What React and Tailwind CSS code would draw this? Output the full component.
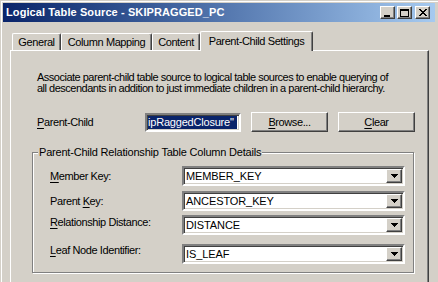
import React from "react";

const raised =
  "bg-[#d4d0c8] border border-t-white border-l-white border-r-[#404040] border-b-[#404040] shadow-[inset_-1px_-1px_0_#808080]";

function TitleButton({ children, className = "" }) {
  return (
    <div className={`w-[15px] h-[13px] flex items-center justify-center ${raised} ${className}`}>
      {children}
    </div>
  );
}

function Tab({ label, width, active }) {
  if (active) {
    return (
      <div
        className={`${width} h-[20px] -mb-[1px] relative z-10 bg-[#d4d0c8] border-t border-l border-white border-r border-r-[#404040] shadow-[inset_-1px_0_0_#808080] rounded-t-[2px] flex items-start pt-[3px] justify-center`}
      >
        {label}
      </div>
    );
  }
  return (
    <div
      className={`${width} h-[17px] bg-[#d4d0c8] border-t border-l border-white border-r border-r-[#404040] shadow-[inset_-1px_0_0_#808080] rounded-t-[2px] flex items-center justify-center`}
    >
      {label}
    </div>
  );
}

function U({ children }) {
  return <span className="underline underline-offset-[2px]">{children}</span>;
}

function Button({ children }) {
  return (
    <div className={`w-[77px] h-[20px] flex items-center justify-center ${raised}`}>
      {children}
    </div>
  );
}

function Combo({ value }) {
  return (
    <div className="w-[223px] h-[20px] flex p-[1px] bg-white border-2 border-t-[#808080] border-l-[#808080] border-b-white border-r-white shadow-[inset_1px_1px_0_#404040,inset_-1px_-1px_0_#d4d0c8]">
      <div className="flex-1 flex items-center pl-[1px] tracking-[-0.1px]">{value}</div>
      <div className={`w-[16px] h-full flex items-center justify-center ${raised}`}>
        <svg width="7" height="4" viewBox="0 0 7 4">
          <path d="M0 0h7v1h-1v1h-1v1h-1v1h-1v-1h-1v-1h-1v-1h-1z" fill="#000" />
        </svg>
      </div>
    </div>
  );
}

function Row({ label, value, className = "", labelClass = "" }) {
  return (
    <div className={`flex items-center ${className}`}>
      <div className={`w-[132px] ${labelClass}`}>{label}</div>
      <Combo value={value} />
    </div>
  );
}

export default function App() {
  return (
    <div className="w-[438px] h-[282px] overflow-hidden bg-[#d4d0c8] flex flex-col pt-[3px] pl-[3px] pr-[3px] shadow-[inset_1px_1px_0_#d4d0c8,inset_2px_2px_0_#ffffff] font-['Liberation_Sans',Arial,sans-serif] text-[11px] leading-[13px] tracking-[-0.4px] text-black">
      {/* Title bar */}
      <div className="flex h-[19px] items-center bg-linear-to-r from-[#0a246a] to-[#a6caf0] pl-[3px] pr-[5px]">
        <div className="flex-1 text-white font-bold text-[11px] tracking-[0.1px] whitespace-nowrap">
          Logical Table Source - SKIPRAGGED_PC
        </div>
        <TitleButton>
          <div className="w-[6px] h-[2px] bg-black mt-[6px] -ml-[2px]" />
        </TitleButton>
        <TitleButton className="ml-[2px]">
          <div className="w-[9px] h-[8px] border border-black border-t-2" />
        </TitleButton>
        <TitleButton className="ml-[3px]">
          <svg width="8" height="7" viewBox="0 0 8 7">
            <path d="M0 0h2v1h1v1h2v-1h1v-1h2v1h-1v1h-1v1h-1v1h1v1h1v1h1v1h-2v-1h-1v-1h-2v1h-1v1h-2v-1h1v-1h1v-1h1v-1h-1v-1h-1v-1h-1z" fill="#000" />
          </svg>
        </TitleButton>
      </div>

      {/* Tabs */}
      <div className="flex items-end h-[28px] pl-[9px] whitespace-nowrap">
        <Tab label="General" width="w-[49px]" />
        <Tab label="Column Mapping" width="w-[91px]" />
        <Tab label="Content" width="w-[48px]" />
        <Tab label="Parent-Child Settings" width="w-[113px]" active />
      </div>

      {/* Panel */}
      <div className="ml-[7px] w-[419px] flex-1 border-t border-l border-white border-r border-r-[#404040] shadow-[inset_-1px_0_0_#808080] pl-[21px] pt-[21px]">
        <div className="ml-[5px] leading-[11px] whitespace-nowrap tracking-[-0.5px]">
          Associate parent-child table source to logical table sources to enable querying of
          <br />
          all descendants in addition to just immediate children in a parent-child hierarchy.
        </div>

        <div className="ml-[5px] mt-[18px] flex items-center h-[20px]">
          <div className="w-[108px]">
            <U>P</U>arent-Child
          </div>
          <div className="w-[96px] h-[19px] flex items-center overflow-hidden bg-white border-2 border-t-[#808080] border-l-[#808080] border-b-white border-r-white shadow-[inset_1px_1px_0_#404040,inset_-1px_-1px_0_#d4d0c8] pl-[1px] pr-[2px]">
            <div className="bg-[#0a246a] text-white w-full h-[13px] flex items-center whitespace-nowrap overflow-hidden tracking-[-0.2px]">
              ipRaggedClosure"
            </div>
          </div>
          <div className="ml-[10px]">
            <Button>
              <span>
                <U>B</U>rowse...
              </span>
            </Button>
          </div>
          <div className="ml-[10px]">
            <Button>
              <span>
                <U>C</U>lear
              </span>
            </Button>
          </div>
        </div>

        {/* Group box */}
        <div className="relative mt-[20px] w-[382px] h-[121px] border border-[#808080] shadow-[inset_1px_1px_0_#ffffff,1px_1px_0_#ffffff] pl-[17px] pt-[13px]">
          <div className="absolute -top-[7px] left-[5px] px-[1px] bg-[#d4d0c8] leading-[12px] whitespace-nowrap tracking-[-0.2px]">
            Parent-Child Relationship Table Column Details
          </div>
          <Row label={<><U>M</U>ember Key:</>} value="MEMBER_KEY" />
          <Row label={<>Parent <U>K</U>ey:</>} value="ANCESTOR_KEY" className="mt-[5px]" />
          <Row
            label={<><U>R</U>elationship Distance:</>}
            value="DISTANCE"
            className="mt-[4px]"
            labelClass="mb-[6px]"
          />
          <Row
            label={<><U>L</U>eaf Node Identifier:</>}
            value="IS_LEAF"
            className="mt-[9px]"
            labelClass="mb-[7px]"
          />
        </div>
      </div>
    </div>
  );
}
